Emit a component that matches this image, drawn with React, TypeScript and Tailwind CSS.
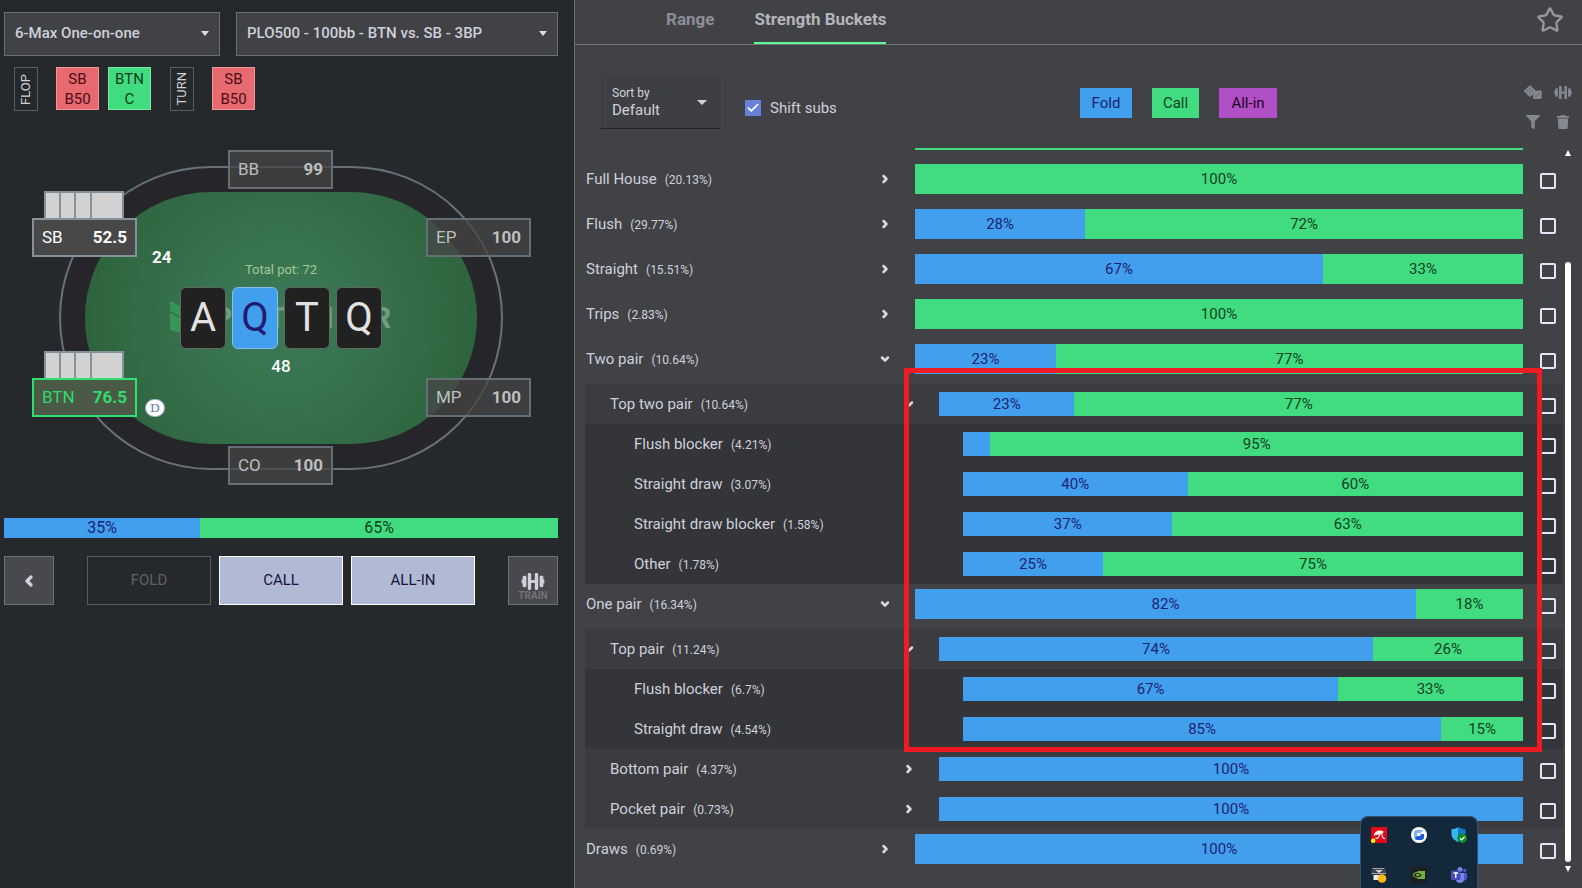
import React from 'react';
import { Check, ChevronDown, ChevronLeft, ChevronRight, Star } from 'lucide-react';
import { FaFilter, FaTrash } from 'react-icons/fa';
import clsx from 'clsx';

interface Bucket {
    name: string;
    share: string;
    level: 0 | 1 | 2;
    fold: number;
    state?: 'open' | 'closed';
}

const buckets: Bucket[] = [
    { name: 'Full House', share: '20.13', level: 0, fold: 0, state: 'closed' },
    { name: 'Flush', share: '29.77', level: 0, fold: 28, state: 'closed' },
    { name: 'Straight', share: '15.51', level: 0, fold: 67.1, state: 'closed' },
    { name: 'Trips', share: '2.83', level: 0, fold: 0, state: 'closed' },
    { name: 'Two pair', share: '10.64', level: 0, fold: 23.2, state: 'open' },
    { name: 'Top two pair', share: '10.64', level: 1, fold: 23.2, state: 'open' },
    { name: 'Flush blocker', share: '4.21', level: 2, fold: 4.9 },
    { name: 'Straight draw', share: '3.07', level: 2, fold: 40.1 },
    { name: 'Straight draw blocker', share: '1.58', level: 2, fold: 37.4 },
    { name: 'Other', share: '1.78', level: 2, fold: 25 },
    { name: 'One pair', share: '16.34', level: 0, fold: 82.4, state: 'open' },
    { name: 'Top pair', share: '11.24', level: 1, fold: 74.3, state: 'open' },
    { name: 'Flush blocker', share: '6.7', level: 2, fold: 67 },
    { name: 'Straight draw', share: '4.54', level: 2, fold: 85.4 },
    { name: 'Bottom pair', share: '4.37', level: 1, fold: 100, state: 'closed' },
    { name: 'Pocket pair', share: '0.73', level: 1, fold: 100, state: 'closed' },
    { name: 'Draws', share: '0.69', level: 0, fold: 100, state: 'closed' },
];

const rowStyles = ['h-[45px]', 'h-10 bg-[#3b3c3f]', 'h-10 bg-[#343538]'];
const labelStyles = ['w-[330px] pl-px', 'w-[354px] pl-[25px]', 'w-[378px] pl-[49px]'];
const barStyles = ['h-[30px] mt-[5px]', 'h-6 mt-2', 'h-6 mt-2'];

const Dumbbell: React.FC<{ className?: string }> = ({ className }) => (
    <svg viewBox="0 0 24 18" className={className} fill="currentColor" aria-hidden="true">
        <rect x="0" y="7" width="2" height="4" />
        <rect x="1" y="3" width="4" height="12" rx="1.5" />
        <rect x="6.5" y="0" width="3.6" height="18" rx="1.2" />
        <rect x="9" y="7.5" width="6" height="3" />
        <rect x="13.9" y="0" width="3.6" height="18" rx="1.2" />
        <rect x="19" y="3" width="4" height="12" rx="1.5" />
        <rect x="22" y="7" width="2" height="4" />
    </svg>
);

const Dice = () => (
    <svg viewBox="0 0 18 14" className="w-[18px] h-[14px]" aria-hidden="true">
        <path d="M12.500 5.500h4a1.300 1.300 0 0 1 1.300 1.300v5.800a1.300 1.300 0 0 1-1.300 1.300h-6.200a1.300 1.300 0 0 1-1.300-1.300v-2.800z" fill="#858791" />
        <path d="M5.300.7a1 1 0 0 1 1.400 0l5 4.700a1 1 0 0 1 0 1.400l-5 4.800a1 1 0 0 1-1.400 0l-5-4.800a1 1 0 0 1 0-1.400z" fill="#858791" />
        <g fill="#62646b">
            <circle cx="6" cy="3.500" r=".8" />
            <circle cx="3.500" cy="6" r=".8" />
            <circle cx="6" cy="6" r=".8" />
            <circle cx="8.500" cy="6" r=".8" />
            <circle cx="6" cy="8.500" r=".8" />
            <path d="M11 12l4.500-4.500v1l-3.500 3.500z" />
        </g>
    </svg>
);

const Caret: React.FC<{ className?: string }> = ({ className }) => (
    <svg viewBox="0 0 10 5" preserveAspectRatio="none" className={className} aria-hidden="true">
        <path d="M0 0h10L5 5z" fill="currentColor" />
    </svg>
);

interface SplitBarProps {
    fold: number;
    className?: string;
}

const SplitBar: React.FC<SplitBarProps> = ({ fold, className }) => (
    <div className={clsx('flex', className)}>
        {fold > 0 && (
            <div className="bg-[#419fed] text-[#1d2372] flex items-center justify-center" style={{ width: `${fold}%` }}>
                {/* Too narrow for a label under 10% */}
                {fold >= 10 && `${Math.round(fold)}%`}
            </div>
        )}
        {fold < 100 && (
            <div className="flex-1 bg-[#41dc80] text-[#10401f] flex items-center justify-center">
                {`${Math.round(100 - fold)}%`}
            </div>
        )}
    </div>
);

const GameSelect: React.FC<{ label: string; value: string; className: string }> = ({ label, value, className }) => (
    <div className={clsx('relative', className)}>
        <select
            aria-label={label}
            className="appearance-none w-full h-11 pl-2.5 pr-8 pb-0.5 bg-[#414245] border border-[#6d7073] text-[15px] text-[#cfd0dc] font-medium"
        >
            <option>{value}</option>
        </select>
        <Caret className="absolute right-[11px] top-[19px] w-2 h-[5px] text-[#dcdde6]" />
    </div>
);

const StreetTag: React.FC<{ name: string }> = ({ name }) => (
    <div className="w-6 h-11 border border-[#5a5d60] text-[#cfd0dc] text-[13px] flex items-center justify-center">
        <span className="[writing-mode:vertical-rl] rotate-180">{name}</span>
    </div>
);

const ActionChip: React.FC<{ seat: string; action: string; className: string }> = ({ seat, action, className }) => (
    <button className={clsx('w-[43px] h-[43px] border text-[15px] leading-5', className)}>
        {seat}
        <br />
        {action}
    </button>
);

interface SeatProps {
    name: string;
    stack: string;
    place: string;
    kind?: 'folded' | 'villain' | 'hero';
}

const Seat: React.FC<SeatProps> = ({ name, stack, place, kind = 'folded' }) => (
    <div className={clsx('absolute w-[105px]', place)}>
        {kind !== 'folded' && (
            <div className="absolute bottom-full left-3 w-20 h-[27px] flex border-2 border-b-0 border-[#87919b] bg-[#d2d2d2]">
                <span className="w-[15px] border-r-2 border-[#87919b]" />
                <span className="w-[15px] border-r-2 border-[#87919b]" />
                <span className="w-4 border-r-2 border-[#87919b]" />
            </div>
        )}
        <div
            className={clsx(
                'h-[39px] px-2 pt-px border-2 flex items-center justify-between text-[17px]',
                kind === 'folded' && 'bg-[#464646]/75 border-[#666e76] text-[#bdbfbf]',
                kind === 'villain' && 'bg-[#484848] border-[#87919b] text-white',
                kind === 'hero' && 'bg-[#4a5a47] border-[#2fe070] text-[#2fdc6c]',
            )}
        >
            <span>{name}</span>
            <span className="font-bold">{stack}</span>
        </div>
    </div>
);

const PokerTable = () => (
    <div className="relative w-[574px] h-[396px]">
        <div className="absolute left-[59px] top-11 w-[444px] h-[304px] rounded-full bg-[#26252a] border-2 border-[#68717a]" />
        <div className="absolute left-[85px] top-[70px] w-[392px] h-[252px] rounded-full bg-[radial-gradient(circle,#3b7a55_0%,#37734e_35%,#2a5f39_100%)]" />

        {/* Brand watermark behind the board */}
        <div className="absolute left-[170px] top-[179px] flex items-center">
            <svg viewBox="0 0 43 34" className="w-[43px] h-[34px]" aria-hidden="true">
                <path d="M0 0l18 9v10L0 10zM0 12l18 9v13L0 29z" fill="#369557" />
            </svg>
            <span className="text-[30px] leading-8 font-bold text-[#719c80]">PLOTRAINER</span>
        </div>

        <Seat name="BB" stack="99" place="left-[228px] top-7" />
        <Seat name="EP" stack="100" place="left-[426px] top-24" />
        <Seat name="MP" stack="100" place="left-[426px] top-64" />
        <Seat name="CO" stack="100" place="left-[228px] top-[324px]" />
        <Seat name="SB" stack="52.5" place="left-8 top-24" kind="villain" />
        <Seat name="BTN" stack="76.5" place="left-8 top-64" kind="hero" />

        <div className="absolute left-[152px] top-[125px] text-[17px] leading-5 font-bold text-white">24</div>
        <div className="absolute left-[180px] top-[138px] w-[202px] text-center text-[13px] leading-5 text-[#a3c79b]">Total pot: 72</div>
        <div className="absolute left-[180px] top-[165px] flex gap-1.5">
            {['A', 'Q', 'T', 'Q'].map((rank, i) => (
                <div
                    key={i}
                    className={clsx(
                        'w-[46px] h-[62px] rounded-md border flex items-center justify-center text-[40px] leading-none',
                        i === 1 ? 'bg-[#419fed] border-[#82bdf2] text-[#241c73]' : 'bg-[#212121] border-[#5f6763] text-[#e2e2e2]',
                    )}
                >
                    {rank}
                </div>
            ))}
        </div>
        <div className="absolute left-[180px] top-[234px] w-[202px] text-center text-[17px] leading-5 font-medium text-white">48</div>
        <div className="absolute left-[145px] top-[277px] w-5 h-[18px] rounded-full bg-white border border-[#9db0cc] font-['Liberation_Serif',serif] text-[13px] leading-4 text-center text-[#5674a8]">
            D
        </div>
    </div>
);

const BucketRow: React.FC<{ bucket: Bucket }> = ({ bucket }) => {
    const { name, share, level, fold, state } = bucket;

    return (
        <div className={clsx('flex items-start', rowStyles[level])}>
            <div className={clsx('shrink-0 h-10 pr-6 flex items-center justify-between', labelStyles[level])}>
                <div className="flex items-baseline gap-2 text-[#cfd0dc]">
                    <span>{name}</span>
                    <span className="text-xs">({share}%)</span>
                </div>
                {state && (
                    <button aria-label={`Toggle ${name}`} className="text-[#d8d9e6]">
                        {state === 'open' ? <ChevronDown size={12} strokeWidth={5} /> : <ChevronRight size={12} strokeWidth={5} />}
                    </button>
                )}
            </div>
            <SplitBar fold={fold} className={clsx('flex-1', barStyles[level])} />
            <input
                type="checkbox"
                aria-label={`Select ${name}`}
                className="appearance-none shrink-0 w-4 h-4 mt-3.5 ml-[17px] mr-[7px] border-2 border-[#e4e6f8] rounded-[2px]"
            />
        </div>
    );
};

const SystemTray = () => (
    <div className="fixed bottom-0 right-[104px] w-[118px] h-[72px] pt-2.5 rounded-t-lg bg-[#13283b] border border-b-0 border-[#35506a] grid grid-cols-[40px_40px_40px] auto-rows-[40px] justify-center justify-items-center items-start">
        <svg viewBox="0 0 16 16" className="w-4 h-4">
            <rect width="16" height="16" fill="#e00b18" />
            <path d="M3 9C3 4.500 8 1.500 13 5c-1.200.5-1.800 1.300-2 2.300C9.500 6.500 8 7 7 8c-1.300-.5-2.600-.2-4 1z" fill="#fff" />
            <path d="M9 7c-1 3-2.500 5-4.500 4.200M11 7c0 3 1 4.500 3 4.500" fill="none" stroke="#fff" strokeWidth="1.100" />
            <circle cx="2.200" cy="13.800" r="2.200" fill="#ff0" />
        </svg>
        <svg viewBox="0 0 16 16" className="w-4 h-4">
            <circle cx="8" cy="8" r="8" fill="#fff" />
            <path d="M12.500 3H6a3 3 0 0 0-3 3v4a3 3 0 0 0 .5 1.500L6 9V6h3.500z" fill="#7fb2fb" />
            <path d="M13 7v3a3 3 0 0 1-3 3H6a3 3 0 0 1-2.500-1.500L6 9h3.500V7z" fill="#1f5bd8" />
        </svg>
        <svg viewBox="0 0 16 16" className="w-4 h-4">
            <path d="M7.500 0C5.500 1.600 3 2 .5 2v5c0 4 3 6.500 7 8z" fill="#35b8ee" />
            <path d="M7.500 0c2 1.600 4.500 2 7 2v5c0 4-3 6.500-7 8z" fill="#117bc9" />
            <circle cx="11.200" cy="11.200" r="4.800" fill="#0e8a2a" />
            <path d="M9 11.300l1.600 1.600 3-3.200" fill="none" stroke="#fff" strokeWidth="1.300" />
        </svg>
        <svg viewBox="0 0 16 16" className="w-4 h-4">
            <path d="M1.500 1h12l2 4v2.500H0V5z" fill="#3c3f45" />
            <path d="M1.500 1.500h12M.5 6.500h14.500" stroke="#a5a9b0" />
            <path d="M2.500 8h10v5h-10z" fill="#e9eaec" />
            <path d="M4 3h8l-4 3z" fill="#d5d8dc" />
            <circle cx="11" cy="11.500" r="4.300" fill="#fdb913" />
        </svg>
        <svg viewBox="0 0 16 16" className="w-4 h-4">
            <rect width="16" height="16" fill="#1c1f1c" />
            <path d="M6.500 4H14v8H6.500z" fill="#76b043" />
            <path d="M2 8c2-3.500 6-4 9.500 0-3 4-7 3.500-9.500 0z" fill="#1c1f1c" stroke="#76b043" strokeWidth="1.100" />
            <path d="M4.500 8c1.500-2 3-2 4.500 0-1.500 1.800-3 1.800-4.500 0z" fill="#76b043" />
        </svg>
        <svg viewBox="0 0 16 16" className="w-4 h-4">
            <circle cx="9" cy="2.500" r="2.500" fill="#7b83eb" />
            <circle cx="13.700" cy="3.500" r="1.700" fill="#5059c9" />
            <path d="M11 6h5v5a3 3 0 0 1-4 2.500z" fill="#5059c9" />
            <path d="M5 6h8v6a4 4 0 0 1-8 0z" fill="#7b83eb" />
            <rect y="3.500" width="9.500" height="9.500" rx="1" fill="#464eb8" />
            <path d="M2.500 6h4.500M4.750 6v5" stroke="#fff" strokeWidth="1.300" />
        </svg>
    </div>
);

const TablePanel = () => (
    <section className="w-[575px] shrink-0 bg-[#26292c] border-r border-[#6b6d70]">
        <div className="flex gap-4 pt-3 pl-1 pr-4">
            <GameSelect label="Game" value="6-Max One-on-one" className="w-[216px]" />
            <GameSelect label="Spot" value="PLO500 - 100bb - BTN vs. SB - 3BP" className="flex-1" />
        </div>

        <div className="flex mt-[11px] pl-3.5 h-[55px] items-start">
            <StreetTag name="FLOP" />
            <ActionChip seat="SB" action="B50" className="ml-[18px] bg-[#e66a70] border-[#f2959a] text-[#4c0d15]" />
            <ActionChip seat="BTN" action="C" className="ml-[9px] mr-[19px] bg-[#41dc80] border-[#7deaa9] text-[#0e3d1e]" />
            <StreetTag name="TURN" />
            <ActionChip seat="SB" action="B50" className="ml-[18px] bg-[#e66a70] border-[#f2959a] text-[#4c0d15]" />
        </div>

        <PokerTable />

        <SplitBar fold={35.4} className="h-5 ml-1 mr-4 text-base" />

        <div className="flex mt-[18px] pl-1 pr-4 h-[49px] text-[15px]">
            <button aria-label="Back" className="w-[50px] bg-[#48494c] border border-[#6f7275] text-[#cfd0dc] flex items-center justify-center">
                <ChevronLeft size={16} strokeWidth={5} />
            </button>
            <div className="flex-1 flex gap-2 mx-[33px]">
                <button disabled className="flex-1 border border-[#5a5d60] text-[#5f6265]">FOLD</button>
                <button className="flex-1 bg-[#b1bad5] border border-white text-[#14143c]">CALL</button>
                <button className="flex-1 bg-[#b1bad5] border border-white text-[#14143c]">ALL-IN</button>
            </div>
            <button className="w-[50px] bg-[#48494c] border border-[#6f7275] flex flex-col items-center pt-4">
                <Dumbbell className="w-6 h-[17px] shrink-0 text-[#cfd0dc]" />
                <span className="text-[10px] leading-3 font-bold text-[#707276]">TRAIN</span>
            </button>
        </div>
    </section>
);

const BucketsPanel = () => (
    <section className="flex-1 min-w-0 bg-[#414245] flex flex-col">
        <header className="h-[45px] shrink-0 border-b border-[#737477] flex justify-between">
            <nav className="flex gap-10 pl-[91px] text-[17px] font-bold">
                <button className="pb-1 text-[#8d8e98]">Range</button>
                <button className="pb-0.5 border-b-2 border-[#5cfb93] text-[#b4b5ba]">Strength Buckets</button>
            </nav>
            <button aria-label="Favourite" className="pr-[18px] pb-1 text-[#96979a]">
                <Star size={28} strokeWidth={2} strokeLinejoin="miter" />
            </button>
        </header>

        <div className="h-[103px] shrink-0 pt-[33px] pl-[26px] pr-2.5 flex items-start">
            <div className="relative w-[120px] h-[51px] bg-[#3e3f42] border-b border-[#222428] rounded-t">
                <label htmlFor="sort" className="absolute left-[11px] top-[7px] text-xs leading-4 text-[#d0d2dc]">
                    Sort by
                </label>
                <select id="sort" className="appearance-none w-full h-full pl-[11px] pt-3.5 bg-transparent text-[15px] text-[#d0d2dc]">
                    <option>Default</option>
                </select>
                <Caret className="absolute right-3.5 top-[22px] w-2.5 h-[5px] text-[#d0d2dc]" />
            </div>
            <label className="ml-6 mt-[19px] flex items-center gap-[9px] text-[15px] text-[#cfd0dc]">
                <span className="relative flex">
                    <input type="checkbox" defaultChecked className="appearance-none w-4 h-4 bg-[#6680dc]" />
                    <Check size={14} strokeWidth={3} className="absolute left-px top-px text-white pointer-events-none" />
                </span>
                Shift subs
            </label>

            <div className="ml-auto mr-[247px] mt-2.5 flex gap-5 text-[15px]">
                <button className="h-[30px] w-[52px] bg-[#419fed] text-[#1d2372]">Fold</button>
                <button className="h-[30px] w-[47px] bg-[#41dc80] text-[#10401f]">Call</button>
                <button className="h-[30px] w-[58px] bg-[#b14fc6] text-[#1c0524]">All-in</button>
            </div>

            <div className="grid grid-cols-[18px_18px] auto-rows-[18px] gap-3 mt-[5px] text-[#858791] place-items-center">
                <button aria-label="Random hand"><Dice /></button>
                <button aria-label="Train"><Dumbbell className="w-[18px] h-[13px]" /></button>
                <button aria-label="Filter"><FaFilter size={14} /></button>
                <button aria-label="Clear"><FaTrash size={14} /></button>
            </div>
        </div>

        <div className="relative flex-1 min-h-0 pl-2.5 pr-[19px] text-[15px]">
            {/* Bottom edge of the bucket scrolled out above */}
            <div className="h-[11px] pl-[330px] pr-10">
                <div className="h-0.5 bg-[#41dc80]" />
            </div>
            {buckets.map((bucket, i) => (
                <BucketRow key={i} bucket={bucket} />
            ))}

            <div className="absolute left-[329px] right-10 top-[220px] h-[384px] border-[5px] border-[#ed1c24] pointer-events-none" />

            {/* Scrollbar */}
            <div className="absolute right-[11px] top-0.5 bottom-4 w-1.5 flex flex-col items-center text-white">
                <Caret className="w-1.5 h-1.5 shrink-0 rotate-180" />
                <div className="w-1.5 mt-[106px] flex-1 rounded-full bg-white" />
                <Caret className="w-1.5 h-1.5 mt-1 shrink-0" />
            </div>
        </div>
    </section>
);

export default function App() {
    return (
        <main className="flex h-screen overflow-hidden font-[Roboto,'Open_Sans',sans-serif]">
            <TablePanel />
            <BucketsPanel />
            <SystemTray />
        </main>
    );
}
